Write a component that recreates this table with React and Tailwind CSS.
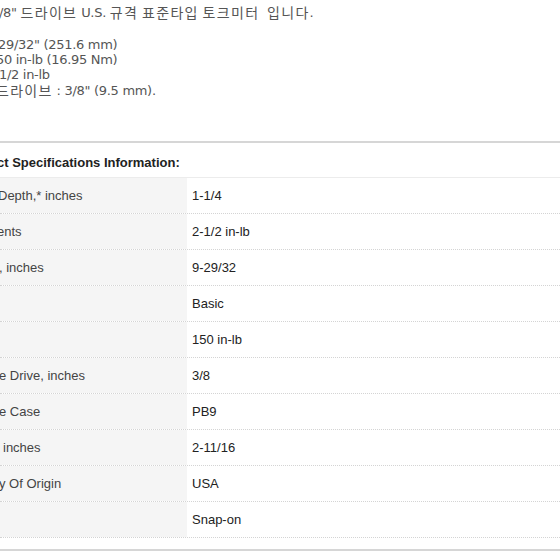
import React from "react";

const specs = [
    ["Depth,* inches", "1-1/4", "-ml-[2px]"],
    ["ents", "2-1/2 in-lb", "-ml-[3px]"],
    [", inches", "9-29/32", "-ml-[1px]"],
    ["", "Basic", ""],
    ["", "150 in-lb", ""],
    ["e Drive, inches", "3/8", "-ml-[1px]"],
    ["e Case", "PB9", "-ml-[1px]"],
    ["inches", "2-11/16", "ml-[3px]"],
    ["y Of Origin", "USA", "-ml-[1px]"],
    ["", "Snap-on", ""],
];

const Ko = ({ children }) => (
    <span className="text-[14px] leading-[16px] tracking-[1.3px] align-top">{children}</span>
);

const App = () => {
    return (
        <div className="w-[560px] h-[560px] overflow-hidden bg-white text-[#333] font-['Liberation_Sans',Arial,sans-serif]">
            {/* intro text, clipped on the left like the source page */}
            <div className="pt-[5px] text-[13px] leading-[16px] text-[#555] font-['DejaVu_Sans','Noto_Sans_CJK_KR',sans-serif] whitespace-pre tracking-[-0.3px]">
                <p className="h-[16px] -ml-[1px]">
                    /8" <Ko>드라이브</Ko> U.S. <Ko>규격</Ko> <Ko>표준타입</Ko> <Ko>토크미터</Ko>  <Ko>입니다</Ko>.
                </p>
                <p className="h-[16px]"></p>
                <p className="h-[15px] -ml-[2px]">29/32" (251.6 mm)</p>
                <p className="h-[15px] -ml-[4px]">50 in-lb (16.95 Nm)</p>
                <p className="h-[16px] -ml-[1px]">1/2 in-lb</p>
                <p className="h-[16px] -ml-[4px]">
                    <Ko>드라이브</Ko> : 3/8" (9.5 mm).
                </p>
            </div>

            <div className="mt-[42px] border-t-2 border-[#d6d6d6]">
                <div className="h-[34px] pt-[5px] flex items-center -ml-[3px] text-[13px] font-bold text-[#222]">
                    ct Specifications Information:
                </div>
                <div className="border-t border-[#ececec]">
                    {specs.map(([label, value, shift], i) => (
                        <div
                            key={i}
                            className="flex h-[36px] border-b border-dotted border-[#d4d4d4] text-[13px]"
                        >
                            <div className="w-[187px] bg-[#f5f5f5] flex items-center whitespace-nowrap text-[#444]">
                                <span className={shift}>{label}</span>
                            </div>
                            <div className="flex-1 flex items-center pl-[5px] text-[#222]">
                                {value}
                            </div>
                        </div>
                    ))}
                </div>
                <div className="mt-[11px] border-t-2 border-[#d6d6d6]"></div>
            </div>
        </div>
    );
};

export default App;
